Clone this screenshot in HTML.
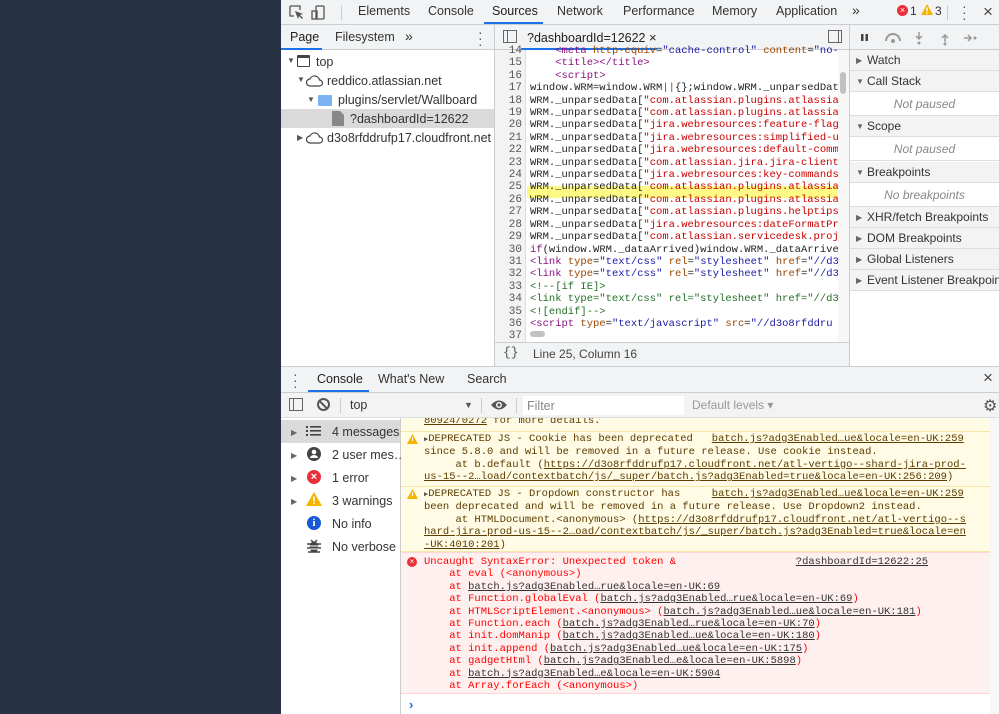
<!DOCTYPE html>
<html><head><meta charset="utf-8"><style>
*{margin:0;padding:0;box-sizing:border-box}
body{width:999px;height:714px;overflow:hidden;position:relative;background:#fff;font-family:"Liberation Sans",sans-serif;font-size:12px;color:#333}
.a{position:absolute}
.mono{font-family:"Liberation Mono",monospace;font-size:10.5px;line-height:12.4px;white-space:pre}
.tab{position:absolute;top:4px;font-size:12.5px;color:#333}
.hl{background:#f1f3f4}
.r{color:#c80000}.p{color:#881280}.at{color:#994500}.v{color:#1a1aa6}.g{color:#236e25}.b{color:#1a1aa6}
.sec{position:absolute;left:850px;width:149px;height:21px;background:#f3f3f3;border-bottom:1px solid #ddd;font-size:12px;line-height:21px;padding-left:17px;color:#333}
.np{position:absolute;left:850px;width:149px;height:24px;border-bottom:1px solid #ddd;font-style:italic;color:#888;text-align:center;line-height:24px;font-size:12px}
.tri{position:absolute;left:6px;font-size:8px;color:#666}
.u{text-decoration:underline}
.w{color:#5c3c00}
.e{color:#f00}
.sl{position:absolute;left:281px;width:119px;height:23px;font-size:12px;line-height:23px;color:#333}
</style></head><body>
<div class="a" style="left:0;top:0;width:281px;height:714px;background:#263143"></div>

<div class="a hl" style="left:281px;top:0;width:718px;height:25px;border-bottom:1px solid #cbcdd1"></div>
<svg class="a" style="left:288px;top:4px" width="40" height="17" viewBox="0 0 40 17"><path d="M2 2h10v4M2 2v10h4" fill="none" stroke="#555" stroke-width="1.3"/><path d="M7 7l8 3-3 1 3 3-1 1-3-3-1 3z" fill="#555"/><rect x="28" y="2" width="8" height="13" rx="1" fill="none" stroke="#555" stroke-width="1.3"/><rect x="24" y="7" width="5" height="8" fill="none" stroke="#555" stroke-width="1.3"/></svg>
<div class="a" style="left:341px;top:5px;width:1px;height:15px;background:#ccc"></div>
<div class="tab" style="left:358px">Elements</div>
<div class="tab" style="left:428px">Console</div>
<div class="tab" style="left:492px;color:#222">Sources</div>
<div class="a" style="left:484px;top:22px;width:59px;height:2px;background:#1a73e8"></div>
<div class="tab" style="left:557px">Network</div>
<div class="tab" style="left:623px">Performance</div>
<div class="tab" style="left:712px">Memory</div>
<div class="tab" style="left:776px">Application</div>
<div class="tab" style="left:852px;font-size:14px;top:2px">»</div>
<div class="a" style="left:897px;top:5px;width:11px;height:11px;border-radius:50%;background:#e8303a;color:#fff;font-size:9px;line-height:11px;text-align:center">×</div>
<div class="a" style="left:910px;top:4px;font-size:12px">1</div>
<svg class="a" style="left:921px;top:4px" width="12" height="12"><path d="M6 0L12 11H0z" fill="#f4b400"/><rect x="5.3" y="3.5" width="1.4" height="4" fill="#fff"/><rect x="5.3" y="8.5" width="1.4" height="1.4" fill="#fff"/></svg>
<div class="a" style="left:935px;top:4px;font-size:12px">3</div>
<div class="a" style="left:947px;top:5px;width:1px;height:15px;background:#ccc"></div>
<div class="a" style="left:962px;top:3px;font-size:14px;line-height:6px;color:#555">·<br>·<br>·</div>
<div class="a" style="left:983px;top:2px;font-size:17px;color:#444">×</div>

<div class="a hl" style="left:281px;top:25px;width:214px;height:25px;border-bottom:1px solid #cbcdd1"></div>
<div class="a" style="left:290px;top:30px;font-size:12.5px;color:#222">Page</div>
<div class="a" style="left:281px;top:48px;width:41px;height:2px;background:#1a73e8"></div>
<div class="a" style="left:335px;top:30px;font-size:12.5px">Filesystem</div>
<div class="a" style="left:405px;top:28px;font-size:14px">»</div>
<div class="a" style="left:478px;top:29px;font-size:14px;line-height:6px;color:#555">·<br>·<br>·</div>
<div class="a" style="left:494px;top:25px;width:1px;height:342px;background:#cbcdd1"></div>
<div class="a" style="left:287px;top:56px;font-size:8px;color:#555">▼</div>
<div class="a" style="left:297px;top:55px;width:13px;height:12px;border:1.5px solid #444;border-top-width:3px;border-radius:1px"></div>
<div class="a" style="left:316px;top:55px;font-size:12.5px">top</div>
<div class="a" style="left:297px;top:75px;font-size:8px;color:#555">▼</div>
<svg class="a" style="left:306px;top:74px" width="18" height="13"><path d="M4 12a3.5 3.5 0 0 1 0-7a5 5 0 0 1 9.5 1a3 3 0 0 1 0 6z" fill="none" stroke="#444" stroke-width="1.2"/></svg>
<div class="a" style="left:327px;top:74px;font-size:12.5px">reddico.atlassian.net</div>
<div class="a" style="left:307px;top:95px;font-size:8px;color:#555">▼</div>
<div class="a" style="left:318px;top:95px;width:14px;height:11px;background:#7cb4f3;border-radius:1px"></div>
<div class="a" style="left:338px;top:93px;font-size:12.5px">plugins/servlet/Wallboard</div>
<div class="a" style="left:281px;top:109px;width:213px;height:19px;background:#dadada"></div>
<svg class="a" style="left:332px;top:111px" width="12" height="15"><path d="M0 0h8l4 4v11H0z" fill="#888"/></svg>
<div class="a" style="left:350px;top:112px;font-size:12.5px">?dashboardId=12622</div>
<div class="a" style="left:297px;top:133px;font-size:8px;color:#555">▶</div>
<svg class="a" style="left:306px;top:131px" width="18" height="13"><path d="M4 12a3.5 3.5 0 0 1 0-7a5 5 0 0 1 9.5 1a3 3 0 0 1 0 6z" fill="none" stroke="#444" stroke-width="1.2"/></svg>
<div class="a" style="left:327px;top:131px;font-size:12.5px">d3o8rfddrufp17.cloudfront.net</div>

<div class="a hl" style="left:495px;top:25px;width:355px;height:25px;border-bottom:1px solid #cbcdd1"></div>
<div class="a" style="left:503px;top:30px;width:14px;height:13px;border:1px solid #666"><div style="position:absolute;left:3px;top:0;width:1px;height:11px;background:#666"></div></div>
<div class="a" style="left:527px;top:30px;font-size:12.5px;color:#222">?dashboardId=12622 <span style="font-size:13px">×</span></div>
<div class="a" style="left:521px;top:48px;width:136px;height:2px;background:#1a73e8"></div>
<div class="a" style="left:828px;top:30px;width:14px;height:13px;border:1px solid #666"><div style="position:absolute;left:9px;top:0;width:1px;height:11px;background:#666"></div></div>
<div class="a" style="left:495px;top:50px;width:31px;height:292px;background:#f3f3f3;border-right:1px solid #ddd"></div>
<div class="a" style="left:527px;top:186px;width:311px;height:12px;background:#fffa86"></div>
<div class="a mono" style="left:498px;top:45px;color:#555;text-align:right;width:24px;overflow:hidden;height:297px;font-size:11px">14
15
16
17
18
19
20
21
22
23
24
25
26
27
28
29
30
31
32
33
34
35
36
37</div>
<div class="a mono" style="left:530px;top:45px;width:308px;height:283px;overflow:hidden;color:#222">    <span class="p">&lt;meta</span> <span class="at">http-equiv</span>=<span class="v">"cache-control"</span> <span class="at">content</span>=<span class="v">"no-cache"</span>
    <span class="p">&lt;title&gt;&lt;/title&gt;</span>
    <span class="p">&lt;script&gt;</span>
window.WRM=window.WRM<span class="at">||</span>{};window.WRM._unparsedData
WRM._unparsedData[<span class="r">"com.atlassian.plugins.atlassian</span>
WRM._unparsedData[<span class="r">"com.atlassian.plugins.atlassian</span>
WRM._unparsedData[<span class="r">"jira.webresources:feature-flags</span>
WRM._unparsedData[<span class="r">"jira.webresources:simplified-ui</span>
WRM._unparsedData[<span class="r">"jira.webresources:default-comm</span>
WRM._unparsedData[<span class="r">"com.atlassian.jira.jira-client</span>
WRM._unparsedData[<span class="r">"jira.webresources:key-commands</span>
WRM._unparsedData[<span class="r">"com.atlassian.plugins.atlassian</span>
WRM._unparsedData[<span class="r">"com.atlassian.plugins.atlassian</span>
WRM._unparsedData[<span class="r">"com.atlassian.plugins.helptips</span>
WRM._unparsedData[<span class="r">"jira.webresources:dateFormatPr</span>
WRM._unparsedData[<span class="r">"com.atlassian.servicedesk.proj</span>
<span class="p">if</span>(window.WRM._dataArrived)window.WRM._dataArrived
<span class="p">&lt;link</span> <span class="at">type</span>=<span class="v">"text/css"</span> <span class="at">rel</span>=<span class="v">"stylesheet"</span> <span class="at">href</span>=<span class="v">"//d3o</span>
<span class="p">&lt;link</span> <span class="at">type</span>=<span class="v">"text/css"</span> <span class="at">rel</span>=<span class="v">"stylesheet"</span> <span class="at">href</span>=<span class="v">"//d3o</span>
<span class="g">&lt;!--[if IE]&gt;</span>
<span class="g">&lt;link type="text/css" rel="stylesheet" href="//d3o</span>
<span class="g">&lt;![endif]--&gt;</span>
<span class="p">&lt;script</span> <span class="at">type</span>=<span class="v">"text/javascript"</span> <span class="at">src</span>=<span class="v">"//d3o8rfddru</span></div>
<div class="a" style="left:838px;top:50px;width:11px;height:292px;background:#f7f7f7"></div>
<div class="a" style="left:840px;top:72px;width:6px;height:22px;background:#c1c1c1;border-radius:3px"></div>
<div class="a" style="left:530px;top:331px;width:15px;height:6px;background:#c1c1c1;border-radius:3px"></div>
<div class="a hl" style="left:495px;top:342px;width:355px;height:25px;border-top:1px solid #cbcdd1"></div>
<div class="a" style="left:503px;top:345px;font-family:'Liberation Mono',monospace;font-size:13px;color:#555">{}</div>
<div class="a" style="left:533px;top:347px;font-size:12px;color:#444">Line 25, Column 16</div>
<div class="a" style="left:849px;top:25px;width:1px;height:342px;background:#cbcdd1"></div>

<div class="a hl" style="left:850px;top:25px;width:149px;height:25px;border-bottom:1px solid #cbcdd1"></div>
<svg class="a" style="left:858px;top:30px" width="130" height="16"><rect x="3" y="4" width="2.5" height="7" fill="#444"/><rect x="7.5" y="4" width="2.5" height="7" fill="#444"/><path d="M28 11a7 7 0 0 1 14 0" fill="none" stroke="#999" stroke-width="2"/><circle cx="35" cy="11" r="2" fill="#999"/><path d="M61 2v7M58 6l3 3 3-3" fill="none" stroke="#999" stroke-width="1.5"/><circle cx="61" cy="13" r="1.5" fill="#999"/><path d="M87 12V5M84 8l3-3 3 3" fill="none" stroke="#999" stroke-width="1.5"/><circle cx="87" cy="14" r="1.5" fill="#999"/><path d="M106 8h7M110 5l3 3-3 3" fill="none" stroke="#999" stroke-width="1.5"/><circle cx="117" cy="8" r="1.5" fill="#999"/></svg>
<div class="sec" style="top:50px"><span class="tri" style="top:0">▶</span>Watch</div>
<div class="sec" style="top:71px"><span class="tri">▼</span>Call Stack</div>
<div class="np" style="top:92px">Not paused</div>
<div class="sec" style="top:116px"><span class="tri">▼</span>Scope</div>
<div class="np" style="top:137px">Not paused</div>
<div class="sec" style="top:162px"><span class="tri">▼</span>Breakpoints</div>
<div class="np" style="top:183px">No breakpoints</div>
<div class="sec" style="top:207px"><span class="tri">▶</span>XHR/fetch Breakpoints</div>
<div class="sec" style="top:228px"><span class="tri">▶</span>DOM Breakpoints</div>
<div class="sec" style="top:249px"><span class="tri">▶</span>Global Listeners</div>
<div class="sec" style="top:270px;white-space:nowrap;overflow:hidden"><span class="tri">▶</span>Event Listener Breakpoints</div>

<div class="a hl" style="left:281px;top:366px;width:718px;height:27px;border-top:1px solid #cbcdd1;border-bottom:1px solid #cbcdd1"></div>
<div class="a" style="left:293px;top:371px;font-size:14px;line-height:6px;color:#555">·<br>·<br>·</div>
<div class="a" style="left:317px;top:372px;font-size:12.5px;color:#222">Console</div>
<div class="a" style="left:308px;top:390px;width:61px;height:2px;background:#1a73e8"></div>
<div class="a" style="left:378px;top:372px;font-size:12.5px">What's New</div>
<div class="a" style="left:467px;top:372px;font-size:12.5px">Search</div>
<div class="a" style="left:983px;top:368px;font-size:17px;color:#444">×</div>
<div class="a" style="left:281px;top:393px;width:718px;height:25px;background:#f3f3f3;border-bottom:1px solid #ddd"></div>
<div class="a" style="left:289px;top:398px;width:14px;height:13px;border:1px solid #666"><div style="position:absolute;left:3px;top:0;width:1px;height:11px;background:#666"></div></div>
<div class="a" style="left:317px;top:398px;width:13px;height:13px;border:2px solid #555;border-radius:50%;overflow:hidden"><div style="position:absolute;left:3px;top:-2px;width:2px;height:13px;background:#555;transform:rotate(-45deg)"></div></div>
<div class="a" style="left:340px;top:398px;width:1px;height:15px;background:#ccc"></div>
<div class="a" style="left:350px;top:398px;font-size:12.5px">top</div>
<div class="a" style="left:464px;top:400px;font-size:9px;color:#555">▼</div>
<div class="a" style="left:481px;top:398px;width:1px;height:15px;background:#ccc"></div>
<svg class="a" style="left:490px;top:399px" width="18" height="12"><path d="M1 6Q9-3 17 6Q9 15 1 6z" fill="#555"/><circle cx="9" cy="6" r="3" fill="#fff"/><circle cx="9" cy="6" r="1.6" fill="#555"/></svg>
<div class="a" style="left:516px;top:398px;width:1px;height:15px;background:#ccc"></div>
<div class="a" style="left:523px;top:396px;width:161px;height:19px;background:#fff"></div>
<div class="a" style="left:527px;top:399px;font-size:12.5px;color:#888">Filter</div>
<div class="a" style="left:692px;top:398px;font-size:12px;color:#999">Default levels ▾</div>
<div class="a" style="left:983px;top:396px;font-size:16px;color:#555">⚙</div>

<div class="a" style="left:400px;top:418px;width:1px;height:296px;background:#ccc"></div>
<div class="sl" style="top:420px;background:#dadada"></div>
<div class="a" style="left:291px;top:428px;font-size:8px;color:#666">▶</div>
<div class="a" style="left:291px;top:451px;font-size:8px;color:#666">▶</div>
<div class="a" style="left:291px;top:474px;font-size:8px;color:#666">▶</div>
<div class="a" style="left:291px;top:497px;font-size:8px;color:#666">▶</div>
<svg class="a" style="left:306px;top:425px" width="16" height="12"><g fill="#444"><rect x="0" y="1" width="2" height="2"/><rect x="0" y="5" width="2" height="2"/><rect x="0" y="9" width="2" height="2"/><rect x="4" y="1" width="11" height="1.6"/><rect x="4" y="5" width="11" height="1.6"/><rect x="4" y="9" width="11" height="1.6"/></g></svg>
<div class="a" style="left:332px;top:425px;font-size:12.5px">4 messages</div>
<svg class="a" style="left:307px;top:447px" width="14" height="14"><circle cx="7" cy="7" r="7" fill="#444"/><circle cx="7" cy="5" r="2.3" fill="#fff"/><path d="M3 11a4 3 0 0 1 8 0z" fill="#fff"/></svg>
<div class="a" style="left:332px;top:448px;font-size:12.5px">2 user mes…</div>
<div class="a" style="left:307px;top:470px;width:14px;height:14px;border-radius:50%;background:#e8303a;color:#fff;font-size:11px;line-height:14px;text-align:center;font-weight:bold">×</div>
<div class="a" style="left:332px;top:471px;font-size:12.5px">1 error</div>
<svg class="a" style="left:306px;top:492px" width="16" height="14"><path d="M8 0L16 14H0z" fill="#f4b400"/><rect x="7.2" y="4.5" width="1.6" height="5" fill="#fff"/><rect x="7.2" y="10.6" width="1.6" height="1.6" fill="#fff"/></svg>
<div class="a" style="left:332px;top:494px;font-size:12.5px">3 warnings</div>
<div class="a" style="left:307px;top:516px;width:14px;height:14px;border-radius:50%;background:#1a57d6;color:#fff;font-size:11px;line-height:14px;text-align:center;font-weight:bold;font-family:'Liberation Serif',serif">i</div>
<div class="a" style="left:332px;top:517px;font-size:12.5px">No info</div>
<svg class="a" style="left:307px;top:539px" width="14" height="14"><ellipse cx="7" cy="8" rx="4.5" ry="5.5" fill="#444"/><path d="M0 5h14M0 9h14M1 13h12M4 1l2 2M10 1l-2 2" stroke="#444" stroke-width="1.4"/><path d="M2.5 7h9M2.5 10h9" stroke="#fff" stroke-width="1"/></svg>
<div class="a" style="left:332px;top:540px;font-size:12.5px">No verbose</div>

<div class="a" style="left:401px;top:418px;width:589px;height:14px;background:#fffbe5;border-bottom:1px solid #f5e7a5;overflow:hidden"><div class="mono w" style="position:absolute;left:23px;top:-3px"><span class="u">80924/0272</span> for more details.</div></div>
<div class="a" style="left:401px;top:432px;width:589px;height:55px;background:#fffbe5;border-bottom:1px solid #f5e7a5"></div>
<div class="a" style="left:401px;top:487px;width:589px;height:65px;background:#fffbe5;border-bottom:1px solid #f5e7a5"></div>
<div class="a" style="left:401px;top:552px;width:589px;height:142px;background:#fff0f0;border-top:1px solid #ffd6d6;border-bottom:1px solid #ffd6d6"></div>
<div class="a" style="left:990px;top:418px;width:9px;height:296px;background:#f7f7f7"></div>
<svg class="a" style="left:407px;top:434px" width="11" height="10"><path d="M5.5 0L11 10H0z" fill="#f4b400"/><rect x="5" y="3" width="1" height="4" fill="#fff"/></svg>
<svg class="a" style="left:407px;top:489px" width="11" height="10"><path d="M5.5 0L11 10H0z" fill="#f4b400"/><rect x="5" y="3" width="1" height="4" fill="#fff"/></svg>
<div class="a" style="left:407px;top:557px;width:10px;height:10px;border-radius:50%;background:#e8303a;color:#fff;font-size:8px;line-height:10px;text-align:center">×</div>
<div class="a mono w" style="left:424px;top:433px"><span style="font-size:7px;color:#555">▶</span>DEPRECATED JS - Cookie has been deprecated   <span class="u">batch.js?adg3Enabled…ue&amp;locale=en-UK:259</span>
since 5.8.0 and will be removed in a future release. Use cookie instead.
     at b.default (<span class="u">https://d3o8rfddrufp17.cloudfront.net/atl-vertigo--shard-jira-prod-</span>
<span class="u">us-15--2…load/contextbatch/js/_super/batch.js?adg3Enabled=true&amp;locale=en-UK:256:209</span>)</div>
<div class="a mono w" style="left:424px;top:488px"><span style="font-size:7px;color:#555">▶</span>DEPRECATED JS - Dropdown constructor has     <span class="u">batch.js?adg3Enabled…ue&amp;locale=en-UK:259</span>
been deprecated and will be removed in a future release. Use Dropdown2 instead.
     at HTMLDocument.&lt;anonymous&gt; (<span class="u">https://d3o8rfddrufp17.cloudfront.net/atl-vertigo--s</span>
<span class="u">hard-jira-prod-us-15--2…oad/contextbatch/js/_super/batch.js?adg3Enabled=true&amp;locale=en</span>
<span class="u">-UK:4010:201</span>)</div>
<div class="a mono e" style="left:424px;top:556px">Uncaught SyntaxError: Unexpected token &amp;                   <span class="u" style="color:#333">?dashboardId=12622:25</span>
    at eval (&lt;anonymous&gt;)
    at <span class="u" style="color:#333">batch.js?adg3Enabled…rue&amp;locale=en-UK:69</span>
    at Function.globalEval (<span class="u" style="color:#333">batch.js?adg3Enabled…rue&amp;locale=en-UK:69</span>)
    at HTMLScriptElement.&lt;anonymous&gt; (<span class="u" style="color:#333">batch.js?adg3Enabled…ue&amp;locale=en-UK:181</span>)
    at Function.each (<span class="u" style="color:#333">batch.js?adg3Enabled…rue&amp;locale=en-UK:70</span>)
    at init.domManip (<span class="u" style="color:#333">batch.js?adg3Enabled…ue&amp;locale=en-UK:180</span>)
    at init.append (<span class="u" style="color:#333">batch.js?adg3Enabled…ue&amp;locale=en-UK:175</span>)
    at gadgetHtml (<span class="u" style="color:#333">batch.js?adg3Enabled…e&amp;locale=en-UK:5898</span>)
    at <span class="u" style="color:#333">batch.js?adg3Enabled…e&amp;locale=en-UK:5904</span>
    at Array.forEach (&lt;anonymous&gt;)</div>
<div class="a" style="left:409px;top:697px;font-size:13px;color:#1a73e8;font-weight:bold">›</div>
</body></html>
